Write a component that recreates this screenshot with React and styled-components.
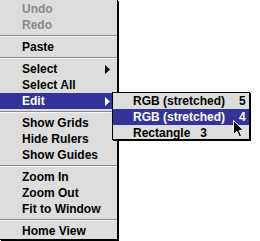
import React from "react";
import styled, { createGlobalStyle } from "styled-components";

const GlobalStyle = createGlobalStyle`
  html, body {
    margin: 0;
    padding: 0;
    background: #ffffff;
  }
  body {
    font-family: "Liberation Sans", Arial, sans-serif;
  }
`;

const mainItems = [
  { label: "Undo", disabled: true },
  { label: "Redo", disabled: true },
  { sep: true },
  { label: "Paste" },
  { sep: true },
  { label: "Select", sub: true },
  { label: "Select All" },
  { label: "Edit", sub: true, active: true },
  { sep: true },
  { label: "Show Grids" },
  { label: "Hide Rulers" },
  { label: "Show Guides" },
  { sep: true },
  { label: "Zoom In" },
  { label: "Zoom Out" },
  { label: "Fit to Window" },
  { sep: true },
  { label: "Home View" },
];

const subItems = [
  { label: "RGB (stretched)", count: 5, gap: 14 },
  { label: "RGB (stretched)", count: 4, gap: 14, active: true },
  { label: "Rectangle", count: 3, gap: 10 },
];

function SubArrow({ active }) {
  return (
    <ArrowIcon width="5" height="9" viewBox="0 0 5 9">
      <polygon points="0,0 5,4.5 0,9" fill={active ? "#ffffff" : "#000000"} />
    </ArrowIcon>
  );
}

function Cursor() {
  return (
    <CursorIcon width="12" height="18" viewBox="0 0 12 18">
      <path
        d="M0.5 0.5 L0.5 14.5 L3.8 11.3 L6.3 16.8 L8.6 15.8 L6.2 10.5 L10.8 10.5 Z"
        fill="#000000"
        stroke="#ffffff"
        strokeWidth="1"
        strokeLinejoin="miter"
      />
    </CursorIcon>
  );
}

export default function App() {
  return (
    <>
      <GlobalStyle />
      <Stage>
        <Menu>
          {mainItems.map((item, i) =>
            item.sep ? (
              <Separator key={i} />
            ) : (
              <Item key={i} $disabled={item.disabled} $active={item.active}>
                {item.label}
                {item.sub && <SubArrow active={item.active} />}
              </Item>
            )
          )}
        </Menu>
        <SubMenu>
          {subItems.map((item, i) => (
            <SubItem key={i} $active={item.active}>
              {item.label}
              <Count style={{ marginLeft: item.gap }}>{item.count}</Count>
            </SubItem>
          ))}
        </SubMenu>
        <Cursor />
      </Stage>
    </>
  );
}

const Stage = styled.div`
  position: relative;
  width: 260px;
  height: 241px;
  overflow: hidden;
`;

const Menu = styled.div`
  width: 117px;
  padding-top: 1px;
  background: #dddddd;
  border-right: 1px solid #000000;
  border-bottom: 1px solid #000000;
  box-shadow: 1px 1px 0 #000000;
`;

const Item = styled.div`
  display: flex;
  align-items: center;
  height: 16px;
  padding-left: 22px;
  padding-right: 7px;
  font-size: 12px;
  font-weight: bold;
  white-space: nowrap;
  color: ${(p) => (p.$active ? "#ffffff" : p.$disabled ? "#888888" : "#000000")};
  background: ${(p) => (p.$active ? "#333399" : "transparent")};
`;

const ArrowIcon = styled.svg`
  display: block;
  margin-left: auto;
`;

const Separator = styled.div`
  height: 6px;
  position: relative;

  &::before {
    content: "";
    position: absolute;
    left: 0;
    right: 0;
    top: 2px;
    height: 1px;
    background: #888888;
  }
  &::after {
    content: "";
    position: absolute;
    left: 0;
    right: 0;
    top: 3px;
    height: 1px;
    background: #f4f4f4;
  }
`;

const SubMenu = styled.div`
  position: absolute;
  left: 112px;
  top: 92px;
  width: 136px;
  height: 46px;
  overflow: hidden;
  background: #dddddd;
  border: 1px solid #000000;
  box-shadow: 1px 1px 0 #000000;
`;

const SubItem = styled.div`
  display: flex;
  align-items: center;
  height: 16px;
  padding-left: 20px;
  font-size: 12px;
  font-weight: bold;
  white-space: nowrap;
  color: ${(p) => (p.$active ? "#ffffff" : "#000000")};
  background: ${(p) => (p.$active ? "#333399" : "transparent")};
`;

const Count = styled.span``;

const CursorIcon = styled.svg`
  position: absolute;
  left: 233px;
  top: 120px;
`;
